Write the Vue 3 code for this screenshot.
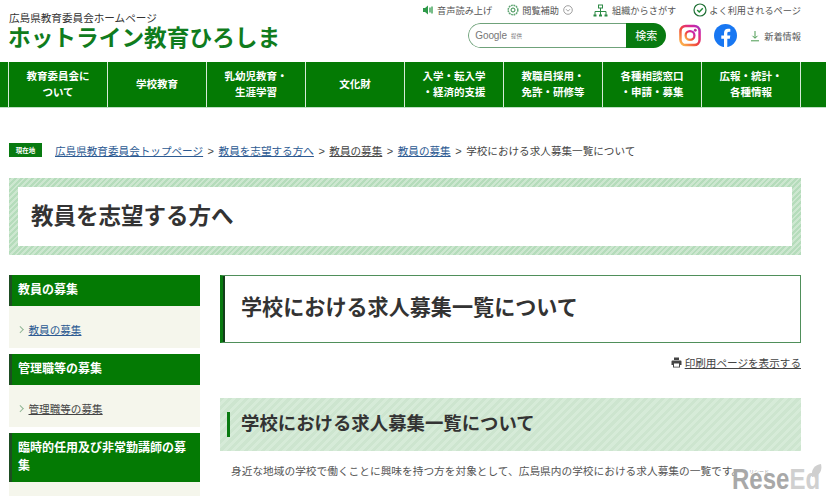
<template>
  <div class="page">
    <header class="head">
      <div class="brand">
        <p class="brand-sub">広島県教育委員会ホームページ</p>
        <p class="brand-title">ホットライン教育ひろしま</p>
      </div>
      <div class="tools">
        <div class="tool-row">
          <span class="tool">
            <svg width="12" height="12" viewBox="0 0 12 12"><path d="M1 4h2l3-2.500v9L3 8H1z" fill="#2f9a4a" /><path d="M8 3.500v5M10 2.500v7" stroke="#2f9a4a" stroke-width="1.300" fill="none" /></svg>
            音声読み上げ
          </span>
          <span class="tool">
            <svg width="12" height="12" viewBox="0 0 12 12"><circle cx="6" cy="6" r="4.800" fill="none" stroke="#5fa573" stroke-width="1.500" stroke-dasharray="1.800 .7" /><circle cx="6" cy="6" r="2" fill="none" stroke="#2f8a45" /></svg>
            閲覧補助
            <svg class="tool-chev" width="10" height="10" viewBox="0 0 10 10"><circle cx="5" cy="5" r="4.300" fill="none" stroke="#777" stroke-width=".7" /><path d="M3 4.200l2 2 2-2" fill="none" stroke="#777" stroke-width=".7" /></svg>
          </span>
          <span class="tool tool-org">
            <svg width="15" height="13" viewBox="0 0 15 13"><path d="M7.500 4v3M2 11V7.500h11V11M7.500 7.500V11" fill="none" stroke="#2c8a45" /><rect x="5.500" y="1" width="4" height="3" fill="none" stroke="#2c8a45" /><path d="M.5 10.500h3v2h-3zM6 10.500h3v2H6zM11.500 10.500h3v2h-3z" fill="#2c8a45" /></svg>
            組織からさがす
          </span>
          <span class="tool tool-fav">
            <svg width="14" height="14" viewBox="0 0 14 14"><circle cx="7" cy="7" r="6" fill="none" stroke="#1f6f35" stroke-width="1.200" /><path d="M4.200 7l2 2 3.600-3.800" fill="none" stroke="#1f8a35" stroke-width="1.400" /></svg>
            よく利用されるページ
          </span>
        </div>
        <div class="search-row">
          <div class="search">
            <div class="search-box"><span class="google">Google</span><span class="provided">提供</span></div>
            <div class="search-btn">検索</div>
          </div>
          <svg class="sns-insta" width="22" height="23" viewBox="0 0 23 23">
            <defs>
              <linearGradient id="insta" x1="0" y1="1" x2="1" y2="0">
                <stop offset="0" stop-color="#fdc04d" />
                <stop offset=".45" stop-color="#f0453c" />
                <stop offset=".8" stop-color="#d6249f" />
                <stop offset="1" stop-color="#9b36c0" />
              </linearGradient>
            </defs>
            <rect x="1.500" y="1.500" width="20" height="20" rx="5.500" fill="none" stroke="url(#insta)" stroke-width="2.600" />
            <circle cx="11.500" cy="11.500" r="4.600" fill="none" stroke="url(#insta)" stroke-width="2.400" />
            <circle cx="17" cy="6" r="1.500" fill="#c92b9c" />
          </svg>
          <svg class="sns-fb" width="23" height="23" viewBox="0 0 23 23">
            <circle cx="11.500" cy="11.500" r="11.500" fill="#1877f2" />
            <path d="M10 23v-8.300H7.300v-3.200H10V9c0-2.700 1.600-4.200 4-4.200 1.200 0 2.300.2 2.300.2v2.700H15c-1.300 0-1.700.8-1.700 1.600v2.200h3l-.5 3.200h-2.500V23z" fill="#fff" />
          </svg>
          <span class="news">
            <svg width="10" height="12" viewBox="0 0 10 12"><path d="M5 1v7M2.500 5.800L5 8.300l2.500-2.500M1 10.800h8" fill="none" stroke="#4a9a50" /></svg>
            新着情報
          </span>
        </div>
      </div>
    </header>

    <nav class="gnav">
      <a v-for="item in navItems" :key="item[0]" class="gnav-item">
        <span v-for="line in item" :key="line">{{ line }}</span>
      </a>
    </nav>

    <div class="crumbs">
      <span class="here">現在地</span>
      <span class="trail">
        <a class="blue">広島県教育委員会トップページ</a><i class="sep">&gt;</i><a class="blue">教員を志望する方へ</a><i class="sep">&gt;</i><a class="dark">教員の募集</a><i class="sep">&gt;</i><a class="blue">教員の募集</a><i class="sep">&gt;</i>学校における求人募集一覧について
      </span>
    </div>

    <div class="banner">
      <h2 class="banner-inner">教員を志望する方へ</h2>
    </div>

    <div class="columns">
      <aside class="side">
        <section v-for="group in sideGroups" :key="group.title" class="side-group">
          <h3 class="side-title">{{ group.title }}</h3>
          <div class="side-body">
            <a v-if="group.link" class="side-link" :class="{ visited: group.visited }"><i class="chev"></i><span>{{ group.link }}</span></a>
          </div>
        </section>
      </aside>
      <main class="main">
        <h1 class="page-title">学校における求人募集一覧について</h1>
        <div class="print">
          <svg width="11" height="11" viewBox="0 0 11 11"><path d="M3 0.500h5V3H3zM1.500 3.500h8a1 1 0 0 1 1 1V8H9v2.500H2V8H.5V4.500a1 1 0 0 1 1-1z" fill="#444" /><rect x="3" y="6.500" width="5" height="3.200" fill="#fff" /></svg>
          <a>印刷用ページを表示する</a>
        </div>
        <h2 class="section-title"><span>学校における求人募集一覧について</span></h2>
        <p class="lead">身近な地域の学校で働くことに興味を持つ方を対象として、広島県内の学校における求人募集の一覧です。</p>
      </main>
    </div>

    <div class="mark">
      <span class="mark-text">Rese<span class="mark-light">Ed</span></span>
      <span class="mark-kana">リシード</span>
      <svg class="mark-leaf" width="11" height="13" viewBox="0 0 11 13"><path d="M1 13C0 6 3 1 10 0c1.500 6-1 12-9 13z" fill="#cfcfcf" /></svg>
    </div>
  </div>
</template>

<script setup>
const navItems = [
  ["教育委員会に", "ついて"],
  ["学校教育"],
  ["乳幼児教育・", "生涯学習"],
  ["文化財"],
  ["入学・転入学", "・経済的支援"],
  ["教職員採用・", "免許・研修等"],
  ["各種相談窓口", "・申請・募集"],
  ["広報・統計・", "各種情報"],
];

const sideGroups = [
  { title: "教員の募集", link: "教員の募集" },
  { title: "管理職等の募集", link: "管理職等の募集", visited: true },
  { title: "臨時的任用及び非常勤講師の募集", link: "" },
];
</script>

<style>
html,
body {
  margin: 0;
  overflow: hidden;
  background: #fff;
}
</style>

<style scoped>
.page {
  position: relative;
  width: 826px;
  height: 496px;
  overflow: hidden;
  font-family: "Noto Sans CJK JP", "Liberation Sans", sans-serif;
  color: #333;
  font-size: 11px;
}
p,
h1,
h2,
h3 {
  margin: 0;
}
.head {
  display: flex;
  justify-content: space-between;
  height: 62px;
  padding: 0 25px 0 9px;
}
.brand-sub {
  margin-top: 12px;
  font-size: 10.600px;
  line-height: 12px;
}
.brand-title {
  margin-left: -1px;
  font-size: 22.700px;
  line-height: 26px;
  font-weight: 700;
  color: #107c1d;
}
.tools {
  display: flex;
  flex-direction: column;
  align-items: flex-end;
}
.tool-row {
  display: flex;
  align-items: center;
  height: 20px;
  color: #555;
  font-size: 9.200px;
}
.tool {
  display: flex;
  align-items: center;
  gap: 3px;
  margin-left: 15px;
}
.tool-chev {
  margin-left: 1px;
}
.tool-org {
  margin-left: 20px;
  gap: 4px;
}
.tool-fav {
  margin-left: 17px;
  gap: 2px;
}
.search-row {
  display: flex;
  align-items: center;
  margin-top: 3px;
}
.search {
  display: flex;
  width: 198px;
  height: 25px;
  border-radius: 13px;
  overflow: hidden;
}
.search-box {
  flex: 1;
  display: flex;
  align-items: center;
  gap: 4px;
  padding-left: 6px;
  border: 1px solid #6fa27a;
  border-right: 0;
  border-radius: 13px 0 0 13px;
}
.google {
  font-family: "Liberation Sans", sans-serif;
  font-size: 10px;
  letter-spacing: -0.1px;
  color: #777;
}
.provided {
  font-size: 5.500px;
  color: #777;
}
.search-btn {
  width: 40px;
  background: #087a10;
  color: #fff;
  font-size: 11px;
  line-height: 25px;
  text-align: center;
}
.sns-insta {
  margin-left: 13px;
}
.sns-fb {
  margin-left: 13px;
}
.news {
  display: flex;
  align-items: center;
  gap: 4px;
  margin-left: 13px;
  font-size: 9.200px;
  color: #555;
}
.gnav {
  display: flex;
  height: 45px;
  padding-left: 8px;
  background: #047a04;
  border-bottom: 1px solid #bfe0c4;
}
.gnav-item {
  flex: 0 0 99px;
  box-sizing: border-box;
  display: flex;
  flex-direction: column;
  align-items: center;
  justify-content: center;
  padding-bottom: 2px;
  border-left: 1px solid #d6ead8;
  color: #fff;
  font-size: 10.500px;
  font-weight: 700;
  line-height: 16px;
}
.gnav-item:last-child {
  flex-basis: 100px;
  border-right: 1px solid #d6ead8;
}
.crumbs {
  display: flex;
  align-items: center;
  margin-top: 34px;
  padding-left: 9px;
  height: 16px;
}
.here {
  width: 33px;
  height: 14px;
  background: #087a10;
  color: #fff;
  font-size: 6.500px;
  font-weight: 700;
  line-height: 14px;
  text-align: center;
}
.trail {
  margin-left: 13px;
  color: #444;
  font-size: 10.600px;
  white-space: nowrap;
}
.sep {
  margin: 0 4.500px;
  font-style: normal;
  font-family: "Liberation Sans", sans-serif;
  font-size: 11px;
}
.blue {
  color: #2c5a92;
  text-decoration: underline;
}
.dark {
  color: #444;
  text-decoration: underline;
}
.banner {
  margin: 20px 25px 0 9px;
  padding: 9px;
  background: repeating-linear-gradient(135deg, #b5dcbb 0 2px, #cde7d0 2px 4px);
}
.banner-inner {
  height: 59px;
  padding-left: 13px;
  background: #fff;
  font-size: 22.500px;
  line-height: 55px;
  font-weight: 700;
}
.columns {
  display: flex;
  gap: 20px;
  margin-top: 20px;
  padding: 0 25px 0 9px;
}
.side {
  flex: 0 0 191px;
}
.side-group {
  margin-bottom: 6px;
}
.side-title {
  padding: 5px 9px 8px 6px;
  background: #047a04;
  border-left: 3px solid #1e4d22;
  color: #fff;
  font-size: 12px;
  line-height: 18px;
  font-weight: 700;
}
.side-body {
  height: 42px;
  background: #f5f6ec;
}
.side-link {
  display: flex;
  align-items: center;
  box-sizing: border-box;
  height: 42px;
  padding: 4px 0 0 9px;
  color: #2c5a92;
  font-size: 10.600px;
}
.side-link span {
  text-decoration: underline;
}
.side-link.visited {
  color: #444;
}
.chev {
  width: 3.500px;
  height: 3.500px;
  margin-right: 6px;
  border-top: 1px solid #8fb594;
  border-right: 1px solid #8fb594;
  transform: rotate(45deg);
}
.main {
  flex: 1;
  min-width: 0;
}
.page-title {
  box-sizing: border-box;
  height: 68px;
  padding-left: 18px;
  border: 1px solid #4f8f5a;
  border-left: 3px solid #087a10;
  box-shadow: inset 2px 0 0 #143d1a;
  font-size: 21.100px;
  line-height: 60px;
  font-weight: 700;
}
.print {
  display: flex;
  justify-content: flex-end;
  align-items: center;
  gap: 3px;
  height: 16px;
  margin-top: 11px;
  font-size: 10.600px;
  color: #444;
}
.print a {
  text-decoration: underline;
}
.section-title {
  height: 53px;
  margin-top: 28px;
  padding: 14px 0 0 7px;
  box-sizing: border-box;
  background: repeating-linear-gradient(135deg, #cde5cf 0 3px, #d6ebd8 3px 6px);
}
.section-title span {
  display: block;
  height: 25px;
  padding-left: 11px;
  border-left: 3px solid #087a10;
  font-size: 18.400px;
  line-height: 20px;
  font-weight: 700;
}
.lead {
  margin-top: 10px;
  padding-left: 11px;
  color: #555;
  font-size: 10.700px;
  line-height: 20px;
  white-space: nowrap;
}
.mark {
  position: absolute;
  left: 732px;
  top: 463px;
  width: 94px;
  height: 33px;
  color: #a8a8a8;
  font-family: "Liberation Sans", sans-serif;
}
.mark-text {
  position: absolute;
  left: 0;
  top: 0;
  font-size: 30px;
  line-height: 32px;
  font-weight: 700;
  white-space: nowrap;
  transform: scaleX(0.8);
  transform-origin: left center;
}
.mark-light {
  color: #d0d0d0;
}
.mark-kana {
  position: absolute;
  top: 5px;
  left: 17px;
  color: #999;
  font-size: 5px;
  line-height: 6px;
  font-family: "Noto Sans CJK JP", sans-serif;
}
.mark-leaf {
  position: absolute;
  left: 79px;
  top: 1px;
}
</style>
